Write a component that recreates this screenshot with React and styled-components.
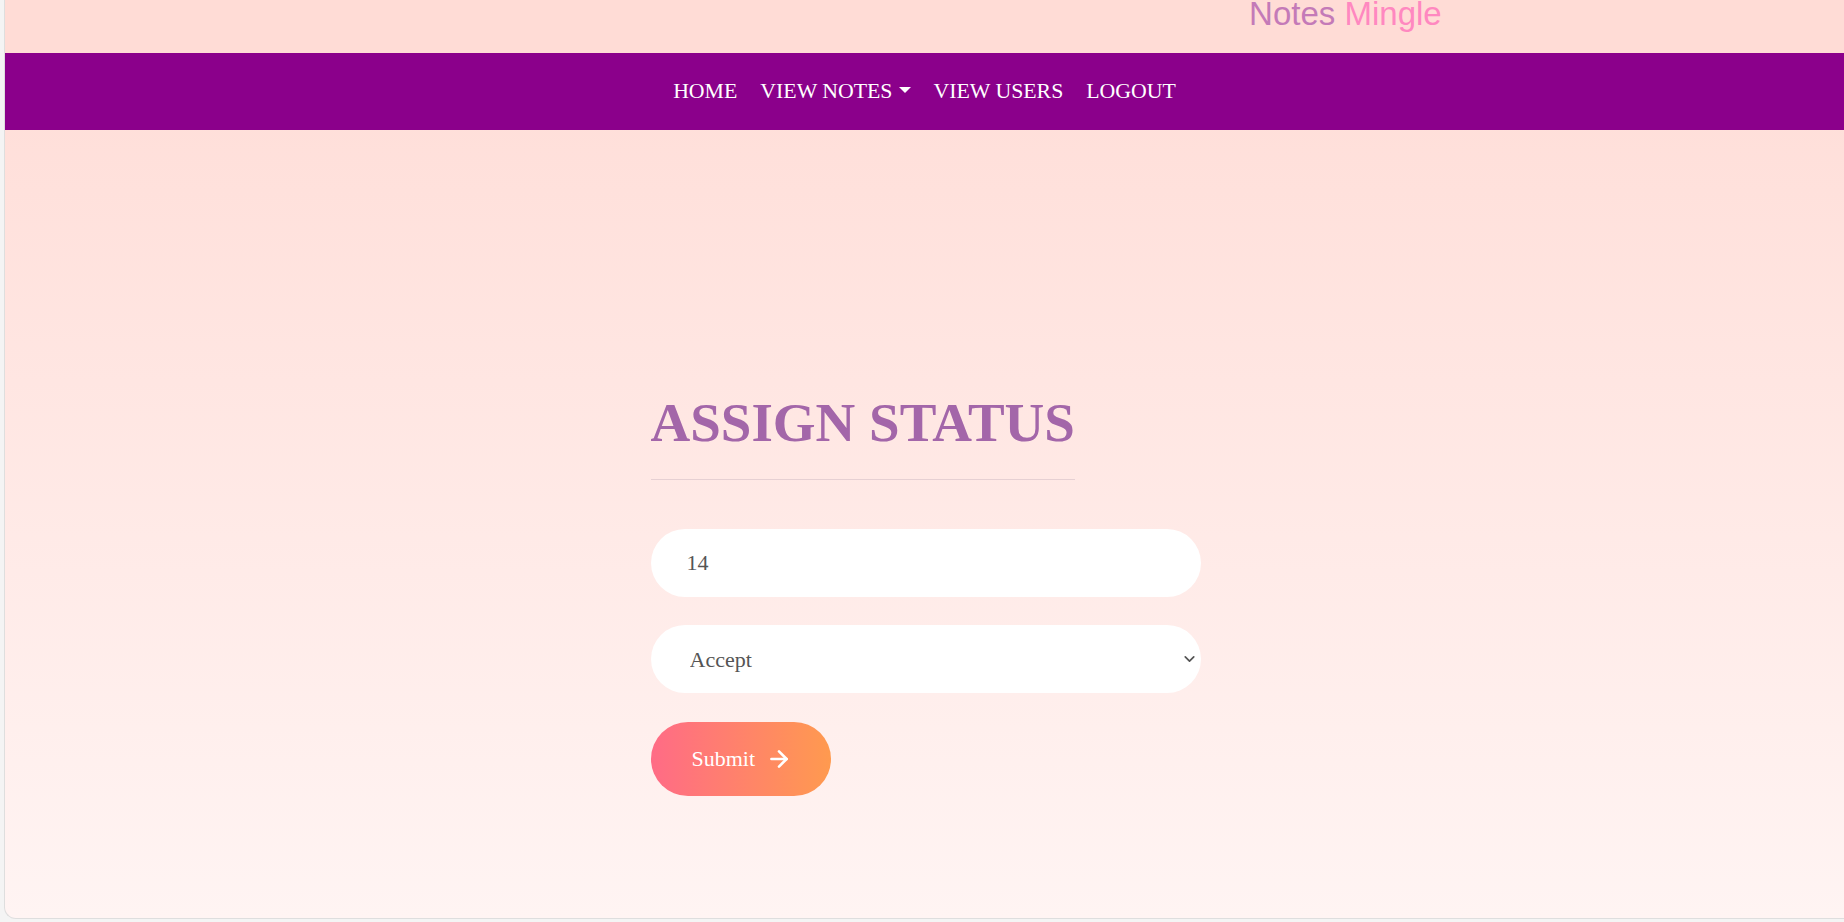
import React from 'react';
import styled, { createGlobalStyle } from 'styled-components';
import { ArrowRight, ChevronDown } from 'lucide-react';

const GlobalStyle = createGlobalStyle`
  html, body {
    margin: 0;
    padding: 0;
    background: #f4f4f4;
  }

  * {
    box-sizing: border-box;
  }
`;

const Frame = styled.div`
  margin-left: 4px;
  height: 919px;
  border-left: 1px solid #dedede;
  border-bottom: 1px solid #dedede;
  border-bottom-left-radius: 12px;
  overflow: hidden;
  display: flex;
  flex-direction: column;
  background: linear-gradient(180deg, #ffdcd6 0%, #fff4f3 100%);
`;

const TopBar = styled.header`
  height: 53px;
  background: #ffdcd6;
  overflow: hidden;
`;

const Brand = styled.div`
  margin: -3px 0 0 67.65%;
  font-family: 'Liberation Sans', Arial, sans-serif;
  font-size: 33px;
  line-height: 33px;
  color: #c47ab8;
  white-space: nowrap;
`;

const BrandAccent = styled.span`
  color: #ff88c0;
`;

const NavBar = styled.nav`
  height: 77px;
  background: #8b008b;
  display: flex;
  align-items: center;
  justify-content: center;
  gap: 23px;
`;

const NavLink = styled.a`
  font-family: 'Liberation Serif', 'Times New Roman', serif;
  font-size: 21.8px;
  color: #ffffff;
  text-decoration: none;
  text-transform: uppercase;
  display: inline-flex;
  align-items: center;
  cursor: pointer;
`;

const Caret = styled.span`
  display: inline-block;
  margin-left: 6px;
  width: 0;
  height: 0;
  border-top: 6.5px solid #ffffff;
  border-left: 6.5px solid transparent;
  border-right: 6.5px solid transparent;
  transform: translateY(-2px);
`;

const Main = styled.main`
  flex: 1;
  padding-top: 260px;
`;

const FormColumn = styled.div`
  width: 550px;
  margin: 0 auto;
  transform: translateX(1px);
`;

const Title = styled.h1`
  display: inline-block;
  margin: 0 0 49px;
  padding-bottom: 23px;
  border-bottom: 1px solid #e6d0d3;
  font-family: 'Liberation Serif', 'Times New Roman', serif;
  font-weight: 700;
  font-size: 55px;
  line-height: 1.2;
  color: #a366a9;
  text-transform: uppercase;
`;

const Form = styled.form`
  display: flex;
  flex-direction: column;
  align-items: flex-start;
`;

const TextInput = styled.input`
  width: 100%;
  height: 68px;
  border: none;
  border-radius: 34px;
  background: #ffffff;
  padding: 0 36px;
  font-family: 'Liberation Serif', 'Times New Roman', serif;
  font-size: 22px;
  color: #555555;
  outline: none;
  margin-bottom: 28px;
`;

const SelectWrap = styled.div`
  position: relative;
  width: 100%;
  margin-bottom: 29px;
`;

const Select = styled.select`
  width: 100%;
  height: 68px;
  border: none;
  border-radius: 34px;
  background: #ffffff;
  padding: 0 36px 0 39px;
  font-family: 'Liberation Serif', 'Times New Roman', serif;
  font-size: 22px;
  color: #555555;
  outline: none;
  appearance: none;
`;

const SelectArrow = styled.span`
  position: absolute;
  right: 3px;
  top: 50%;
  transform: translateY(-50%);
  display: flex;
  color: #555555;
  pointer-events: none;
`;

const SubmitButton = styled.button`
  height: 74px;
  border: none;
  border-radius: 37px;
  padding: 0 39px 0 41px;
  display: inline-flex;
  align-items: center;
  gap: 11px;
  background: linear-gradient(90deg, #ff6b86 0%, #ff9a4f 100%);
  color: #ffffff;
  font-family: 'Liberation Serif', 'Times New Roman', serif;
  font-size: 22px;
  cursor: pointer;
`;

export default function App() {
  return (
    <>
      <GlobalStyle />
      <Frame>
        <TopBar>
          <Brand>
            Notes <BrandAccent>Mingle</BrandAccent>
          </Brand>
        </TopBar>
        <NavBar>
          <NavLink>Home</NavLink>
          <NavLink>
            View Notes
            <Caret />
          </NavLink>
          <NavLink>View Users</NavLink>
          <NavLink>Logout</NavLink>
        </NavBar>
        <Main>
          <FormColumn>
            <Title>Assign Status</Title>
            <Form onSubmit={(e) => e.preventDefault()}>
              <TextInput type="text" defaultValue="14" />
              <SelectWrap>
                <Select defaultValue="Accept">
                  <option>Accept</option>
                  <option>Reject</option>
                </Select>
                <SelectArrow>
                  <ChevronDown size={17} strokeWidth={2.4} />
                </SelectArrow>
              </SelectWrap>
              <SubmitButton type="submit">
                Submit
                <ArrowRight size={26} strokeWidth={2.4} />
              </SubmitButton>
            </Form>
          </FormColumn>
        </Main>
      </Frame>
    </>
  );
}
